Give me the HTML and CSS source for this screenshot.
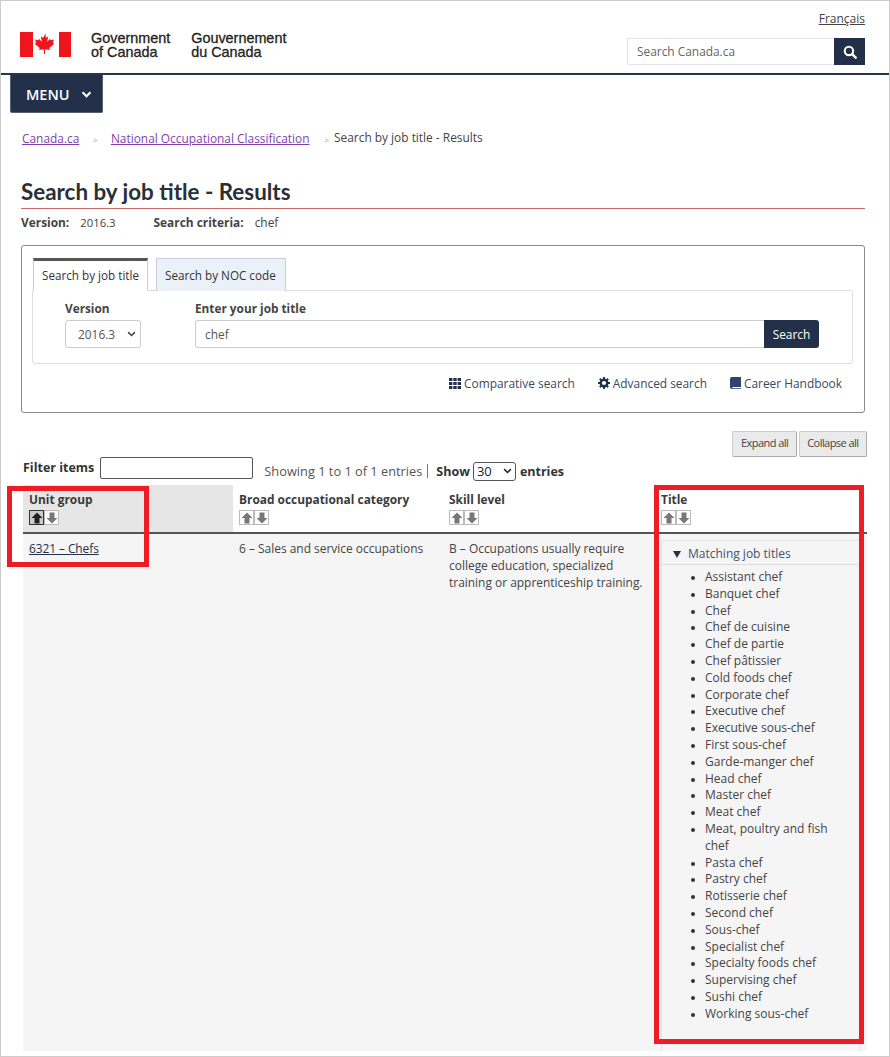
FILE: index.html
```html
<!DOCTYPE html>
<html lang="en">
<head>
<meta charset="utf-8">
<title>Search by job title - Results</title>
<link rel="stylesheet" href="styles.css">
</head>
<body>
<div class="page">
  <header class="site-header">
    <div class="brand">
      <svg class="flag" viewBox="0 0 51 25" width="51" height="25" aria-hidden="true">
        <rect width="13" height="25" fill="#f0141c"/><rect x="39" width="12" height="25" fill="#f0141c"/>
        <path fill="#f0141c" d="M25.500 1.500l-2.300 4.200-2.300-1.200.9 5.200-2.800-3-.6 1.500-3.300-.6 1 3.500-1.400.7 5 4.100-.7 2 4.900-.7.100 4.800h1l.1-4.800 4.900.7-.7-2 5-4.100-1.400-.7 1-3.500-3.300.6-.6-1.500-2.800 3 .9-5.200-2.300 1.200z"/>
      </svg>
      <div class="brand-text">Government<br>of Canada</div>
      <div class="brand-text">Gouvernement<br>du Canada</div>
    </div>
    <div class="header-tools">
      <a class="lang" href="#">Français</a>
      <form class="site-search">
        <span class="site-search-input">Search Canada.ca</span>
        <span class="site-search-btn">
          <svg viewBox="0 0 16 16" width="14" height="14" aria-hidden="true"><circle cx="6.800" cy="6.800" r="4.800" fill="none" stroke="#fff" stroke-width="2.400"/><path d="M10.500 10.500l4 4" stroke="#fff" stroke-width="2.800" stroke-linecap="round"/></svg>
        </span>
      </form>
    </div>
  </header>
  <div class="menu-btn">MENU
    <svg viewBox="0 0 12 8" width="11" height="7" aria-hidden="true"><path d="M1.500 1.500L6 6l4.500-4.500" fill="none" stroke="#fff" stroke-width="2.400"/></svg>
  </div>
  <nav class="crumbs">
    <a href="#">Canada.ca</a><span class="sep sep-a">&gt;</span>
    <a href="#">National Occupational Classification</a><span class="sep sep-b">&gt;</span>
    <span class="crumb-current">Search by job title - Results</span>
  </nav>
  <main class="content">
    <h1>Search by job title - Results</h1>
    <p class="criteria"><b>Version:</b><span class="val-a">2016.3</span><b>Search criteria:</b><span class="val-b">chef</span></p>
    <section class="search-box">
      <div class="tabs">
        <div class="tab tab-active">Search by job title</div>
        <div class="tab">Search by NOC code</div>
      </div>
      <div class="tab-panel">
        <div class="field field-version">
          <label>Version</label>
          <div class="select-box">2016.3
            <svg viewBox="0 0 12 8" width="9" height="6" aria-hidden="true"><path d="M1.500 1.500L6 6l4.500-4.500" fill="none" stroke="#444" stroke-width="2"/></svg>
          </div>
        </div>
        <div class="field field-title">
          <label>Enter your job title</label>
          <div class="input-group">
            <div class="text-input">chef</div>
            <div class="search-btn">Search</div>
          </div>
        </div>
      </div>
      <div class="tool-links">
        <a href="#"><svg viewBox="0 0 12 11" width="12" height="11" aria-hidden="true"><path fill="#223049" d="M0 0h3.400v3H0zM4.300 0h3.400v3H4.300zM8.600 0H12v3H8.600zM0 4h3.400v3H0zM4.300 4h3.400v3H4.300zM8.600 4H12v3H8.600zM0 8h3.400v3H0zM4.300 8h3.400v3H4.300zM8.600 8H12v3H8.600z"/></svg>Comparative search</a>
        <a href="#"><svg viewBox="0 0 12 12" width="12" height="12" aria-hidden="true"><circle cx="6" cy="6" r="3.300" fill="none" stroke="#223049" stroke-width="2.400"/><path d="M6 0v2.500M6 9.500V12M0 6h2.500M9.500 6H12M1.800 1.800l1.800 1.800M8.400 8.400l1.800 1.800M10.200 1.800L8.400 3.600M3.600 8.400l-1.800 1.800" stroke="#223049" stroke-width="2"/></svg>Advanced search</a>
        <a href="#"><svg viewBox="0 0 11 12" width="11" height="12" aria-hidden="true"><path fill="#2f4468" d="M2 0h9v10H2.500a1 1 0 0 0 0 1.200H11V12H2a2 2 0 0 1-2-2V2a2 2 0 0 1 2-2z"/></svg>Career Handbook</a>
      </div>
    </section>
    <div class="results">
      <div class="expand-row">
        <span class="small-btn">Expand all</span>
        <span class="small-btn">Collapse all</span>
      </div>
      <div class="filter-row">
        <label class="filter-label">Filter items</label>
        <span class="filter-input"></span>
        <span class="showing">Showing 1 to 1 of 1 entries</span>
        <span class="pipe"></span>
        <b class="show-word">Show</b>
        <span class="len-select">30
          <svg viewBox="0 0 12 8" width="9" height="6" aria-hidden="true"><path d="M1.500 1.500L6 6l4.500-4.500" fill="none" stroke="#222" stroke-width="2"/></svg>
        </span>
        <b>entries</b>
      </div>
      <table class="results-table">
        <thead>
          <tr>
            <th class="col-1 sorted">Unit group
              <span class="sorter"><span class="arrow arrow-on"><svg viewBox="0 0 12 12" width="12" height="12"><path d="M6 .5l5.500 5.500H8.500v5.500h-5V6H.5z" fill="#222"/></svg></span><span class="arrow"><svg viewBox="0 0 12 12" width="12" height="12"><path d="M6 11.500L.5 6h3V.5h5V6h3z" fill="#777"/></svg></span></span>
            </th>
            <th class="col-2">Broad occupational category
              <span class="sorter"><span class="arrow"><svg viewBox="0 0 12 12" width="12" height="12"><path d="M6 .5l5.500 5.500H8.500v5.500h-5V6H.5z" fill="#777"/></svg></span><span class="arrow"><svg viewBox="0 0 12 12" width="12" height="12"><path d="M6 11.500L.5 6h3V.5h5V6h3z" fill="#777"/></svg></span></span>
            </th>
            <th class="col-3">Skill level
              <span class="sorter"><span class="arrow"><svg viewBox="0 0 12 12" width="12" height="12"><path d="M6 .5l5.500 5.500H8.500v5.500h-5V6H.5z" fill="#777"/></svg></span><span class="arrow"><svg viewBox="0 0 12 12" width="12" height="12"><path d="M6 11.500L.5 6h3V.5h5V6h3z" fill="#777"/></svg></span></span>
            </th>
            <th class="col-4">Title
              <span class="sorter"><span class="arrow"><svg viewBox="0 0 12 12" width="12" height="12"><path d="M6 .5l5.500 5.500H8.500v5.500h-5V6H.5z" fill="#777"/></svg></span><span class="arrow"><svg viewBox="0 0 12 12" width="12" height="12"><path d="M6 11.500L.5 6h3V.5h5V6h3z" fill="#777"/></svg></span></span>
            </th>
          </tr>
        </thead>
        <tbody>
          <tr>
            <td><a class="unit-link" href="#">6321 – Chefs</a></td>
            <td>6 – Sales and service occupations</td>
            <td>B – Occupations usually require college education, specialized training or apprenticeship training.</td>
            <td class="title-cell">
              <div class="details">
                <div class="summary"><span class="triangle"></span>Matching job titles</div>
                <ul>
                  <li>Assistant chef</li><li>Banquet chef</li><li>Chef</li><li>Chef de cuisine</li><li>Chef de partie</li><li>Chef pâtissier</li><li>Cold foods chef</li><li>Corporate chef</li><li>Executive chef</li><li>Executive sous-chef</li><li>First sous-chef</li><li>Garde-manger chef</li><li>Head chef</li><li>Master chef</li><li>Meat chef</li><li>Meat, poultry and fish chef</li><li>Pasta chef</li><li>Pastry chef</li><li>Rotisserie chef</li><li>Second chef</li><li>Sous-chef</li><li>Specialist chef</li><li>Specialty foods chef</li><li>Supervising chef</li><li>Sushi chef</li><li>Working sous-chef</li>
                </ul>
              </div>
            </td>
          </tr>
        </tbody>
      </table>
    </div>
  </main>
  <div class="highlight highlight-unit"></div>
  <div class="highlight highlight-title"></div>
</div>
</body>
</html>
```
FILE: styles.css
```css
* { box-sizing: border-box; }
html, body { margin: 0; padding: 0; background: #fff; }
body { font-family: "Open Sans", "Noto Sans", sans-serif; font-size: 12px; color: #333; }
a { color: inherit; }
.page { position: relative; width: 890px; height: 1057px; border: 1px solid #ccc; overflow: hidden; }

.site-header { height: 74px; border-bottom: 2px solid #26374a; display: flex; justify-content: space-between; padding: 0 24px 0 19px; }
.brand { display: flex; align-items: flex-start; padding-top: 31px; }
.flag { flex: none; margin-right: 20px; }
.brand-text { font-family: "Liberation Sans", Arial, sans-serif; font-size: 14.400px; line-height: 14px; font-weight: 400; color: #222; -webkit-text-stroke: .3px #222; margin-right: 21px; margin-top: -1px; }
.header-tools { display: flex; flex-direction: column; align-items: flex-end; padding-top: 10px; }
.lang { font-size: 12px; line-height: 16px; color: #444; }
.site-search { display: flex; margin-top: 11px; height: 27px; }
.site-search-input { width: 207px; border: 1px solid #e6e6e6; border-right: 0; font-size: 11.900px; line-height: 25px; padding-left: 9px; color: #666; }
.site-search-btn { width: 31px; background: #223049; display: flex; align-items: center; justify-content: center; }

.menu-btn { margin-left: 9px; width: 93px; height: 38px; background: #223049; color: #fff; font-size: 14.500px; font-weight: 600; display: flex; align-items: center; gap: 11px; padding: 1px 0 0 15px; border-radius: 0 0 2px 2px; border: 1px solid #55606e; border-top: 0; }

.crumbs { display: flex; align-items: baseline; margin-top: 17px; padding-left: 21px; font-size: 11.900px; line-height: 16px; }
.crumbs a { color: #7f3fb0; }
.sep { font-size: 8px; color: #999; }
.sep-a { margin: 0 13px 0 14px; }
.sep-b { margin: 0 5px 0 15px; }
.crumb-current { position: relative; top: -1px; color: #444; }

.content { padding: 0 24px 0 20px; }
h1 { margin: 29px 0 0; font-family: Lato, sans-serif; font-size: 22.400px; line-height: 30px; font-weight: 700; color: #2b2f36; padding-bottom: 1px; border-bottom: 1px solid #c96a6a; }
.criteria { margin: 5px 0 0; height: 16px; font-size: 11.900px; line-height: 16px; color: #444; }
.criteria b { font-weight: 700; }
.val-a { margin: 0 38px 0 11px; font-size: 11.300px; }
.val-b { margin-left: 11px; }

.search-box { margin-top: 15px; height: 168px; border: 1px solid #888; border-radius: 3px; padding: 12px 11px 0 10px; }
.tabs { display: flex; gap: 8px; height: 33px; margin-left: 1px; position: relative; z-index: 1; }
.tab { height: 33px; width: 130px; padding: 7px 8px 0; font-size: 11.700px; line-height: 18px; background: #eaf1f8; border: 1px solid #ccd; border-bottom: 0; color: #333; white-space: nowrap; }
.tab-active { background: #fff; border: 1px solid #ccc; border-top: 3px solid #555; border-bottom: 1px solid #fff; padding: 5px 8px 0; width: 115px; }
.tab-panel { height: 74px; border: 1px solid #ddd; border-radius: 0 3px 3px 3px; margin-top: -1px; display: flex; padding: 9px 0 0 32px; }
.field label { display: block; font-size: 11.800px; font-weight: 700; line-height: 16px; color: #444; }
.field-version { width: 130px; }
.field-title { width: 624px; }
.select-box { margin-top: 4px; width: 76px; height: 28px; border: 1px solid #ccc; border-radius: 3px; font-size: 11.900px; line-height: 26px; padding-left: 12px; color: #555; display: flex; align-items: center; gap: 12px; }
.input-group { display: flex; margin-top: 4px; height: 28px; }
.text-input { flex: 1; border: 1px solid #ccc; border-right: 0; border-radius: 3px 0 0 3px; padding-left: 9px; font-size: 11.900px; line-height: 26px; color: #555; }
.search-btn { width: 55px; background: #223049; border-radius: 0 3px 3px 0; color: #fff; font-size: 11.900px; font-weight: 500; line-height: 28px; text-align: center; }
.tool-links { display: flex; justify-content: flex-end; gap: 23px; margin-top: 10px; padding-right: 11px; font-size: 11.900px; line-height: 18px; color: #3b4a60; }
.tool-links a { text-decoration: none; display: flex; align-items: center; gap: 3px; }

.results { margin-right: -2px; padding-left: 2px; }
.expand-row { display: flex; justify-content: flex-end; gap: 2px; margin-top: 18px; height: 26px; }
.small-btn { height: 26px; background: #eaeaea; border: 1px solid #ccc; border-bottom-color: #aaa; border-right-color: #aaa; font-size: 11px; letter-spacing: -.55px; line-height: 22px; padding: 0 7.500px; color: #444; border-radius: 2px; }
.filter-row { display: flex; align-items: center; height: 28px; font-size: 12px; color: #444; }
.filter-label { font-size: 12.500px; font-weight: 700; color: #333; margin-right: 6px; position: relative; top: -4px; }
.filter-input { width: 153px; height: 22px; border: 1px solid #555; border-radius: 2px; margin-right: 11px; position: relative; top: -3px; }
.showing { font-size: 12.800px; color: #555; }
.pipe { width: 1px; height: 14px; background: #777; margin: 0 8px 0 5px; }
.filter-row b { font-size: 12.500px; color: #333; }
.show-word { margin-right: 3px; }
.len-select { width: 43px; height: 19px; border: 1px solid #555; border-radius: 3px; margin-right: 4px; padding-left: 3px; font-weight: 500; font-size: 13px; line-height: 17px; display: flex; align-items: center; gap: 11px; color: #222; }

.results-table { width: 844px; border-collapse: collapse; table-layout: fixed; }
.results-table th { text-align: left; vertical-align: top; font-size: 11.900px; line-height: 16px; font-weight: 700; color: #3b3b3b; padding: 6px 6px 0; height: 48px; border-bottom: 2px solid #555; }
.col-1 { width: 210px; }
.col-2 { width: 210px; }
.col-3 { width: 212px; }
.col-4 { width: 212px; }
th.sorted { background: #e6e6e6; }
.results-table td { background: #f5f5f5; vertical-align: top; font-size: 11.950px; line-height: 16.800px; color: #444; padding: 7px 6px 0; height: 518px; }
.results-table td.title-cell { padding: 6px 7px 0 6px; }
.unit-link { color: #223049; letter-spacing: -.08px; }
.sorter { display: flex; margin-top: 3px; }
.arrow { width: 15px; height: 15px; border: 1px solid #bbb; background: #fff; display: flex; align-items: center; justify-content: center; }
.arrow-on { border: 1px solid #333; background: #ccc; }

.details { border: 1px solid #e4e4e4; border-bottom: 0; height: 511px; font-size: 12px; }
.summary { height: 24px; padding-top: 3px; border-bottom: 1px solid #ddd; padding-left: 11px; display: flex; align-items: center; gap: 7px; color: #3f5273; font-size: 12px; }
.triangle { width: 0; height: 0; border-left: 4px solid transparent; border-right: 4px solid transparent; border-top: 7px solid #223049; }
.details ul { margin: 0; padding: 4px 30px 0 43px; list-style: disc; color: #444; }
.details li { line-height: 16.800px; }
.details li::marker { color: #333; font-size: 10px; }

.highlight { position: absolute; border: 5px solid #ee1c25; pointer-events: none; }
.highlight-unit { left: 6px; top: 485px; width: 142px; height: 81px; }
.highlight-title { left: 653px; top: 484px; width: 210px; height: 559px; }
```
